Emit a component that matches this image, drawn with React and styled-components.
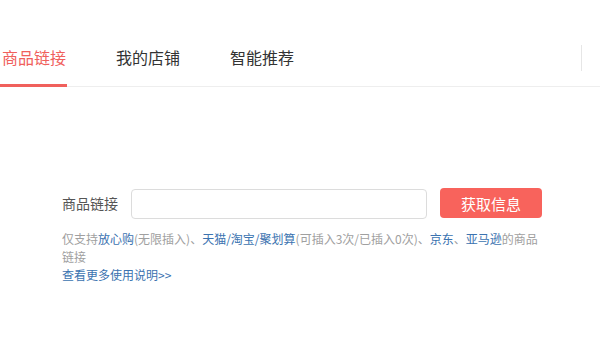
import React, { useState } from 'react';
import styled, { createGlobalStyle } from 'styled-components';

const GlobalStyle = createGlobalStyle`
  html, body {
    margin: 0;
    padding: 0;
    background: #fff;
    font-family: "Microsoft YaHei", "Noto Sans CJK SC", sans-serif;
  }
`;

const Page = styled.div`
  width: 600px;
  height: 340px;
  overflow: hidden;
  background: #fff;
`;

const TabBar = styled.div`
  display: flex;
  align-items: stretch;
  height: 87px;
  border-bottom: 1px solid #eeeeee;
  box-sizing: border-box;
`;

const Tab = styled.div`
  display: flex;
  align-items: flex-end;
  padding: 0 1px 16px 2px;
  margin-right: 47px;
  font-size: 16px;
  line-height: 22px;
  color: ${(p) => (p.$active ? '#f0605c' : '#333')};
  border-bottom: 3px solid ${(p) => (p.$active ? '#f0605c' : 'transparent')};
  margin-bottom: -1px;
  cursor: pointer;
`;

const Divider = styled.div`
  margin-left: auto;
  margin-right: 18px;
  margin-top: 45px;
  width: 1px;
  height: 26px;
  background: #e6e6e6;
`;

const Body = styled.div`
  padding: 100px 0 0 62px;
`;

const FormRow = styled.div`
  display: flex;
  align-items: center;
`;

const Label = styled.label`
  font-size: 14px;
  color: #555;
  margin-right: 13px;
`;

const Input = styled.input`
  width: 296px;
  height: 30px;
  margin-top: 2px;
  box-sizing: border-box;
  border: 1px solid #dcdcdc;
  border-radius: 4px;
  padding: 0 8px;
  outline: none;
  font-size: 13px;
`;

const Button = styled.button`
  margin-left: 13px;
  width: 102px;
  height: 30px;
  border: none;
  border-radius: 4px;
  background: #f8635c;
  color: #fff;
  font-family: inherit;
  font-size: 15px;
  cursor: pointer;
`;

const Help = styled.p`
  width: 482px;
  margin: 11px 0 0;
  font-size: 12px;
  line-height: 18px;
  color: #a0a0a0;
`;

const Link = styled.a`
  color: #3b73b0;
  text-decoration: none;
`;

const tabs = ['商品链接', '我的店铺', '智能推荐'];

export default function App() {
  const [active, setActive] = useState(0);
  return (
    <Page>
      <GlobalStyle />
      <TabBar>
        {tabs.map((t, i) => (
          <Tab key={t} $active={i === active} onClick={() => setActive(i)}>
            {t}
          </Tab>
        ))}
        <Divider />
      </TabBar>
      <Body>
        <FormRow>
          <Label>商品链接</Label>
          <Input />
          <Button>获取信息</Button>
        </FormRow>
        <Help>
          仅支持<Link>放心购</Link>(无限插入)、<Link>天猫/淘宝/聚划算</Link>(可插入3次/已插入0次)、<Link>京东</Link>、<Link>亚马逊</Link>的商品链接
          <br />
          <Link>查看更多使用说明&gt;&gt;</Link>
        </Help>
      </Body>
    </Page>
  );
}
